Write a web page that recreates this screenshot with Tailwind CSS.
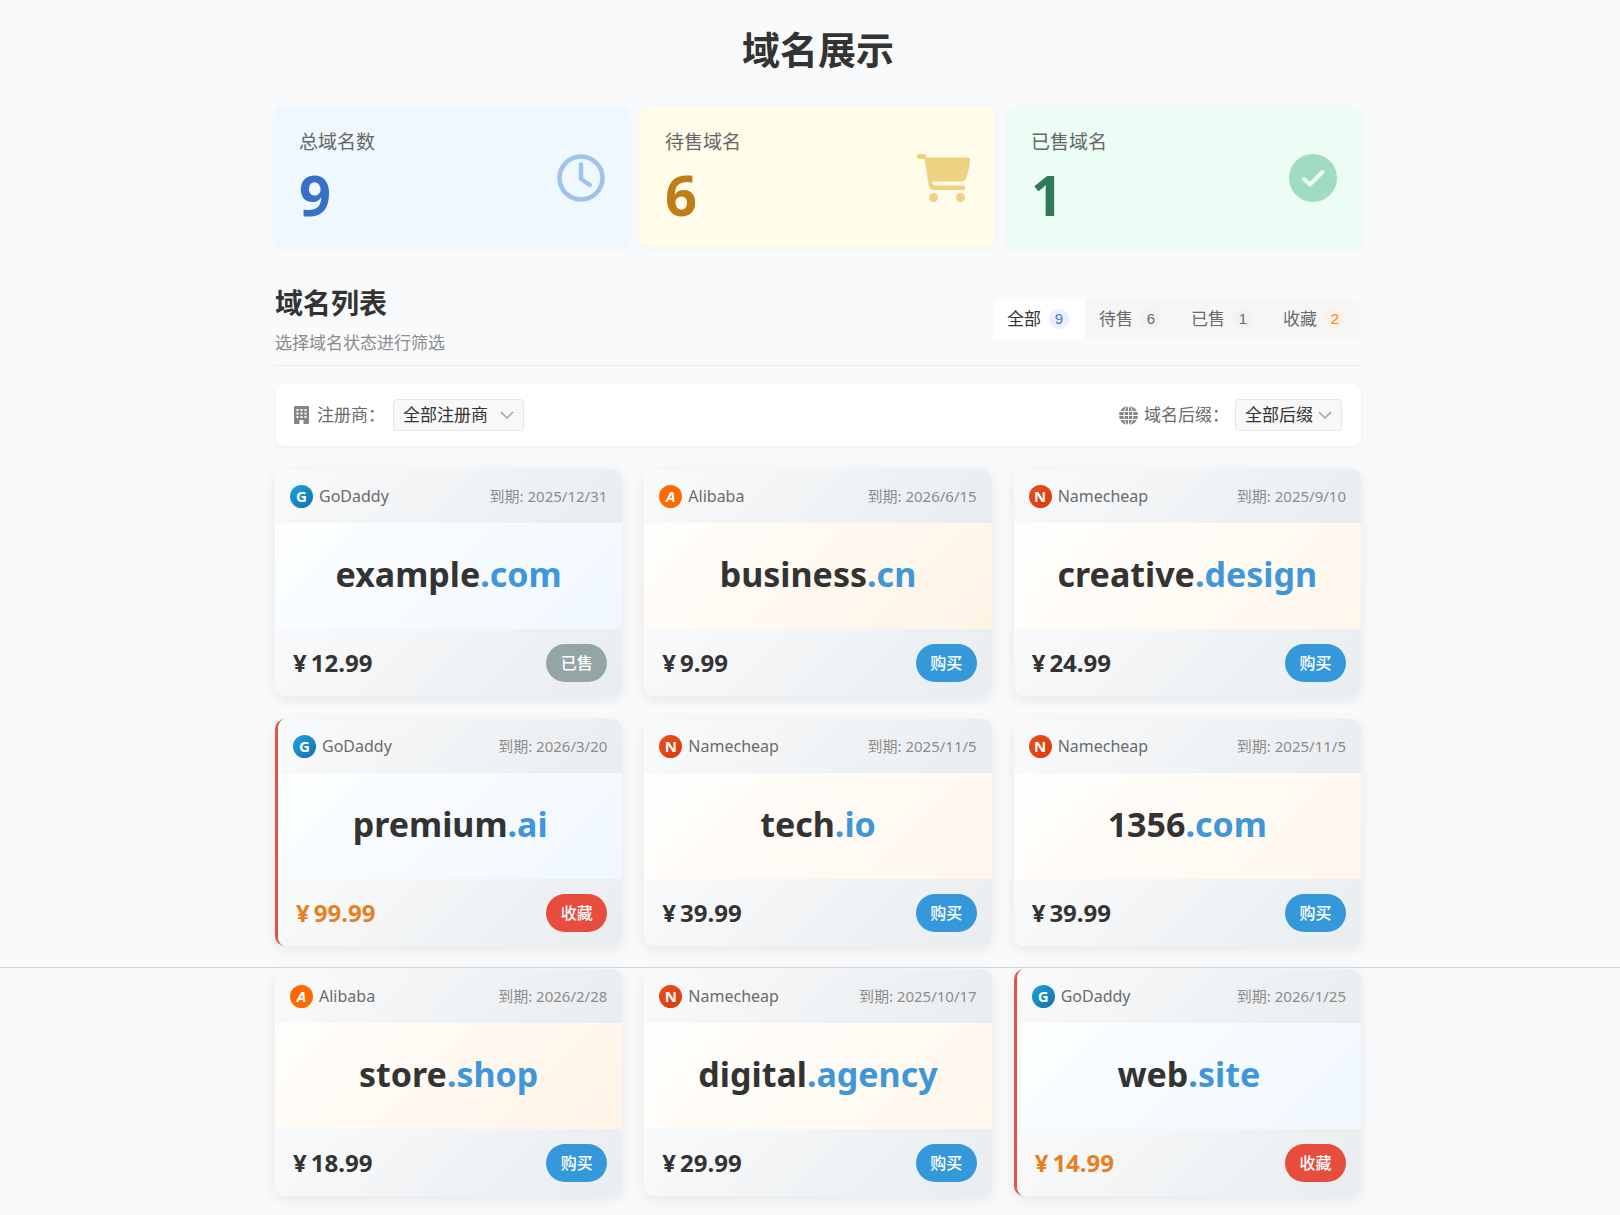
<!DOCTYPE html>
<html lang="zh-CN">
<head>
  <meta charset="UTF-8">
  <meta name="viewport" content="width=device-width, initial-scale=1.0">
  <title>域名展示</title>
  <script src="https://cdn.jsdelivr.net/npm/@tailwindcss/browser@4"></script>
</head>
<body class="relative bg-[#f9fafc] pl-4 text-[#333] font-['Noto_Sans','Noto_Sans_CJK_SC',sans-serif]">

  <!-- Page divider -->
  <div class="absolute inset-x-0 top-[967px] border-t border-[#d3d6da]"></div>

  <main class="mx-auto max-w-[1086px] pt-[21px] pb-5">
    <h1 class="text-center text-[38px] leading-[56px] font-bold">域名展示</h1>

    <!-- Stats -->
    <section class="mt-[30px] grid grid-cols-3 gap-3">
      <div class="flex items-center justify-between rounded-md bg-[#eff7ff] px-6 pt-[23px] pb-[22px] shadow-[0_2px_10px_rgba(0,0,0,0.03)]">
        <div>
          <p class="text-[19px] leading-6 text-[#666]">总域名数</p>
          <p class="mt-3 mb-[3px] text-[56px] leading-[56px] font-bold text-[#3a6fc8]">9</p>
        </div>
        <svg class="size-12" viewBox="0 0 48 48" fill="none" stroke="#a0c3ea" stroke-width="4.5" stroke-linecap="round" stroke-linejoin="round">
          <circle cx="24" cy="24" r="21.5"/>
          <path d="M24 10.500v14.500l9 6"/>
        </svg>
      </div>
      <div class="flex items-center justify-between rounded-md bg-[#fffce9] px-6 pt-[23px] pb-[22px] shadow-[0_2px_10px_rgba(0,0,0,0.03)]">
        <div>
          <p class="text-[19px] leading-6 text-[#666]">待售域名</p>
          <p class="mt-3 mb-[3px] text-[56px] leading-[56px] font-bold text-[#c07d15]">6</p>
        </div>
        <svg class="h-12 w-[54px]" viewBox="0 0 54 48" fill="#efd183">
          <path d="M9.500 3.500h41c2 0 3 1.500 2.600 3.300L52 14l-2.500 9c-.8 3-2.500 4.500-5 4.500H17c-1.500 0-2 .8-1.500 2s1.500 2 2.500 2h28a2.100 2.100 0 0 1 0 4.500H17c-3 0-4.800-2-5.300-5L7.500 5H2.500A2.400 2.400 0 0 1 2.500 0h4.500C8.500 0 9.300 1.500 9.500 3.500z"/>
          <circle cx="16.500" cy="43.500" r="4.500"/>
          <circle cx="43.500" cy="43.500" r="4.500"/>
        </svg>
      </div>
      <div class="flex items-center justify-between rounded-md bg-[#ebfdf5] px-6 pt-[23px] pb-[22px] shadow-[0_2px_10px_rgba(0,0,0,0.03)]">
        <div>
          <p class="text-[19px] leading-6 text-[#666]">已售域名</p>
          <p class="mt-3 mb-[3px] text-[56px] leading-[56px] font-bold text-[#2f7859]">1</p>
        </div>
        <svg class="size-12" viewBox="0 0 48 48" fill="none">
          <circle cx="24" cy="24" r="24" fill="#a0dcc1"/>
          <path d="M15 25l6 5.500L33.500 18" stroke="#ebfdf5" stroke-width="4" stroke-linecap="round" stroke-linejoin="round"/>
        </svg>
      </div>
    </section>

    <!-- List header -->
    <section class="mt-9 flex items-start justify-between border-b border-[#e9ebee] pb-[10px]">
      <div>
        <h2 class="text-[28px] leading-10 font-bold">域名列表</h2>
        <p class="mt-2 text-[17px] leading-6 text-[#8c8c8c]">选择域名状态进行筛选</p>
      </div>
      <div class="mt-4 flex rounded-md bg-[#f6f6f6] text-[17px] text-[#6b6b6b]">
        <button class="flex h-10 w-[92px] items-center gap-2 rounded-l-md bg-white pl-[14px] text-[#333]">全部<span class="flex size-5 items-center justify-center rounded-full bg-[#e8f2ff] font-['Liberation_Sans',sans-serif] text-[15px] text-[#4a78c0]">9</span></button>
        <button class="flex h-10 w-[92px] items-center gap-2 pl-[14px]">待售<span class="flex size-5 items-center justify-center rounded-full bg-[#f2f2f2] font-['Liberation_Sans',sans-serif] text-[15px]">6</span></button>
        <button class="flex h-10 w-[92px] items-center gap-2 pl-[14px]">已售<span class="flex size-5 items-center justify-center rounded-full bg-[#f2f2f2] font-['Liberation_Sans',sans-serif] text-[15px]">1</span></button>
        <button class="flex h-10 w-[92px] items-center gap-2 pl-[14px]">收藏<span class="flex size-5 items-center justify-center rounded-full bg-[#fdf1e4] font-['Liberation_Sans',sans-serif] text-[15px] text-[#e8883a]">2</span></button>
      </div>
    </section>

    <!-- Filters -->
    <section class="mt-[18px] flex items-center justify-between rounded-lg bg-white px-[19px] py-[15px] text-[17px] leading-6 text-[#6b6b6b] shadow-[0_1px_3px_rgba(0,0,0,0.07)]">
      <div class="flex items-center">
        <svg class="mr-2 h-[18px] w-[15px]" viewBox="0 0 15 18" fill="#858585">
          <path fill-rule="evenodd" d="M1 0h13a1 1 0 0 1 1 1v16a1 1 0 0 1-1 1H9.500v-4h-4v4H1a1 1 0 0 1-1-1V1a1 1 0 0 1 1-1zM2.500 3v2h2V3zM6.500 3v2h2V3zM10.500 3v2h2V3zM2.500 6.500v2h2v-2zM6.500 6.500v2h2v-2zM10.500 6.500v2h2v-2zM2.500 10v2h2v-2zM6.500 10v2h2v-2zM10.500 10v2h2v-2z"/>
        </svg>
        <label for="registrar">注册商：</label>
        <div class="relative ml-2">
          <select id="registrar" class="h-8 w-[131px] appearance-none rounded border border-[#e6e6e6] bg-[#f8f8f8] pl-[9px] text-[#333]">
            <option>全部注册商</option>
            <option>GoDaddy</option>
            <option>Alibaba</option>
            <option>Namecheap</option>
          </select>
          <svg class="pointer-events-none absolute top-3 right-[10px] h-2 w-[14px]" viewBox="0 0 14 8" fill="none" stroke="#a0a0a0" stroke-width="1.500"><path d="M1 1l6 6 6-6"/></svg>
        </div>
      </div>
      <div class="flex items-center">
        <svg class="mr-[6px] size-[19px]" viewBox="0 0 19 19">
          <circle cx="9.500" cy="9.500" r="9.500" fill="#858585"/>
          <g fill="none" stroke="#fff" stroke-width="1">
            <path d="M0 9.500h19M1 5.500h17M1 13.500h17M9.500 0v19"/>
            <ellipse cx="9.500" cy="9.500" rx="4.500" ry="9.500"/>
          </g>
        </svg>
        <label for="suffix">域名后缀：</label>
        <div class="relative ml-[6px]">
          <select id="suffix" class="h-8 w-[107px] appearance-none rounded border border-[#e6e6e6] bg-[#f8f8f8] pl-[9px] text-[#333]">
            <option>全部后缀</option>
            <option>.com</option>
            <option>.cn</option>
            <option>.ai</option>
          </select>
          <svg class="pointer-events-none absolute top-3 right-[10px] h-2 w-[14px]" viewBox="0 0 14 8" fill="none" stroke="#a0a0a0" stroke-width="1.500"><path d="M1 1l6 6 6-6"/></svg>
        </div>
      </div>
    </section>

    <!-- Domain cards -->
    <section id="domain-list" class="mt-[23px] grid grid-cols-3 gap-x-[22px] gap-y-[23px]"></section>
  </main>

  <script>
    const registrars = {
      GoDaddy: { letter: "G", logo: "bg-linear-135 from-[#1fa3dc] to-[#1272a8]", body: "bg-linear-135 from-[#fdffff] to-[#f0f7ff]" },
      Alibaba: { letter: "A", logo: "bg-[#ff6a00] italic", body: "bg-linear-135 from-[#fffefc] to-[#fff3e5]" },
      Namecheap: { letter: "N", logo: "bg-linear-135 from-[#e8501c] to-[#d93a0c]", body: "bg-linear-135 from-[#fffefd] to-[#fff7ec]" }
    };

    const statuses = {
      sold: { label: "已售", button: "bg-[#95a5a6]", price: "text-[#333]", border: "" },
      sale: { label: "购买", button: "bg-[#3498db]", price: "text-[#333]", border: "" },
      favorite: { label: "收藏", button: "bg-[#e74c3c]", price: "text-[#e67e22]", border: "border-l-[3px] border-[#e0544a]" }
    };

    const domains = [
      { name: "example", suffix: ".com", registrar: "GoDaddy", expires: "2025/12/31", price: "12.99", status: "sold" },
      { name: "business", suffix: ".cn", registrar: "Alibaba", expires: "2026/6/15", price: "9.99", status: "sale" },
      { name: "creative", suffix: ".design", registrar: "Namecheap", expires: "2025/9/10", price: "24.99", status: "sale" },
      { name: "premium", suffix: ".ai", registrar: "GoDaddy", expires: "2026/3/20", price: "99.99", status: "favorite" },
      { name: "tech", suffix: ".io", registrar: "Namecheap", expires: "2025/11/5", price: "39.99", status: "sale" },
      { name: "1356", suffix: ".com", registrar: "Namecheap", expires: "2025/11/5", price: "39.99", status: "sale" },
      { name: "store", suffix: ".shop", registrar: "Alibaba", expires: "2026/2/28", price: "18.99", status: "sale" },
      { name: "digital", suffix: ".agency", registrar: "Namecheap", expires: "2025/10/17", price: "29.99", status: "sale" },
      { name: "web", suffix: ".site", registrar: "GoDaddy", expires: "2026/1/25", price: "14.99", status: "favorite" }
    ];

    // Render the domain cards
    const list = document.getElementById("domain-list");
    domains.forEach(domain => {
      const registrar = registrars[domain.registrar];
      const status = statuses[domain.status];
      list.innerHTML += `
        <article class="overflow-hidden rounded-[10px] shadow-[0_4px_14px_rgba(0,0,0,0.08)] ${status.border}">
          <div class="flex h-[54px] items-center justify-between bg-linear-135 from-[#f9fafb] to-[#e9edf0] px-[15px]">
            <div class="flex items-center gap-[6px]">
              <span class="flex size-[23px] justify-center rounded-full text-[15px] leading-[22px] font-bold text-white ${registrar.logo}">${registrar.letter}</span>
              <span class="text-[16px] leading-6 text-[#6b6b6b]">${domain.registrar}</span>
            </div>
            <span class="text-[15px] leading-6 text-[#8c8c8c]">到期: ${domain.expires}</span>
          </div>
          <div class="flex h-[106px] items-center justify-center pb-1 ${registrar.body}">
            <h3 class="text-[34px] leading-10 font-bold">${domain.name}<span class="text-[#3f96d8]">${domain.suffix}</span></h3>
          </div>
          <div class="flex h-[67px] items-center justify-between bg-linear-135 from-[#f9fafb] to-[#e9edf0] pr-[15px] pl-[18px]">
            <p class="flex gap-1 text-[24px] leading-8 font-bold ${status.price}"><span>¥</span><span>${domain.price}</span></p>
            <button class="h-[38px] w-[61px] rounded-full text-[16px] font-medium text-white ${status.button}">${status.label}</button>
          </div>
        </article>`;
    });
  </script>
</body>
</html>
